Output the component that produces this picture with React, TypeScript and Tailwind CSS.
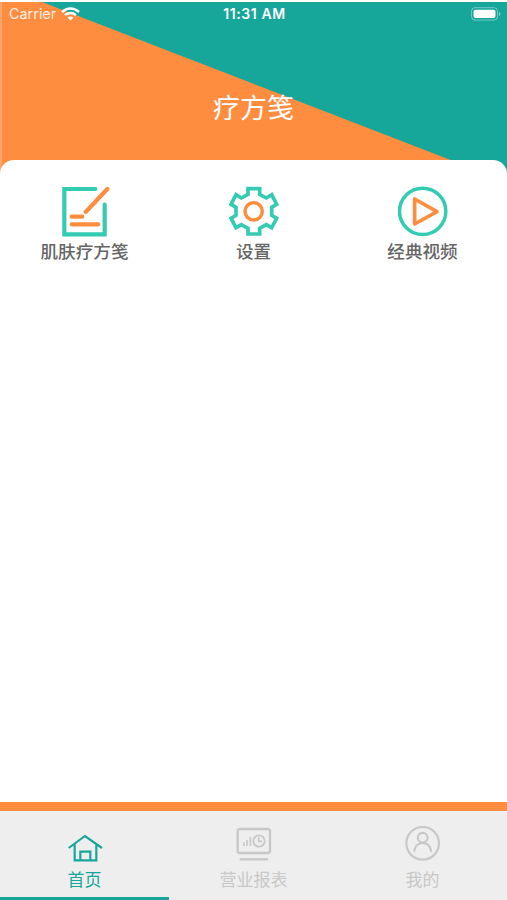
import type { ReactNode } from 'react';

const teal = '#33cbb2';
const orange = '#ff8d40';

const NoteIcon = () => (
  <svg className="h-[52px] w-[50px]" viewBox="1 0 150 156" fill="none" strokeWidth="12.5" strokeLinecap="round">
    <path d="M107 9H14v136h121V56" stroke={teal} />
    <path d="M143 9L78 78M36 92h32M36 115h80" stroke={orange} />
  </svg>
);

const GearIcon = () => (
  <svg className="h-[52px] w-[50px]" viewBox="1 0 150 156" fill="none">
    <path
      d="M58 8H93V25L113 36L129 26L144 55L129 64V88L144 97L129 125L113 116L93 127V144H58V127L38 116L22 125L7 97L22 88V64L7 55L22 26L38 36L58 25Z"
      stroke={teal}
      strokeWidth="11"
    />
    <circle cx="75" cy="76" r="26" stroke={orange} strokeWidth="10.5" />
  </svg>
);

const VideoIcon = () => (
  <svg className="h-[52px] w-[50px]" viewBox="1 0 150 156" fill="none" strokeLinejoin="round">
    <circle cx="75" cy="76" r="69.5" stroke={teal} strokeWidth="10.5" />
    <path d="M51 39v75l67-37z" stroke={orange} strokeWidth="11" />
  </svg>
);

const HomeIcon = () => (
  <svg className="size-9" viewBox="0 0 108 108" fill="none" stroke="currentColor" strokeWidth="6.5">
    <path d="M5 66L54 30L105 66M23 54v49h65V54M40 103V77h30v26" />
  </svg>
);

const ReportIcon = () => (
  <svg className="size-9" viewBox="2 0 108 108" fill="none" stroke="currentColor" strokeWidth="7">
    <rect x="7" y="9" width="97" height="72" rx="7" />
    <path d="M13 100h85" />
    <path d="M26 49v11M35 42v18M45 32v28" strokeWidth="5" />
    <circle cx="71" cy="45" r="17" strokeWidth="5.5" />
    <path d="M70 34v12h10" strokeWidth="5" />
  </svg>
);

const UserIcon = () => (
  <svg className="size-9" viewBox="1 0 108 108" fill="none" stroke="currentColor" strokeWidth="6.5">
    <circle cx="54" cy="52" r="49" />
    <circle cx="54" cy="35" r="14.5" />
    <path d="M29 75C31 43 77 43 79 75" strokeLinecap="round" />
  </svg>
);

const StatusBar = () => (
  <div className="relative grid h-6 grid-cols-3 items-center pr-[5px] pl-[9px] font-['Inter',sans-serif] text-white">
    <div className="flex items-center gap-[5px]">
      <span className="text-[14.4px] leading-none opacity-85">Carrier</span>
      <svg className="h-[14px] w-[19px]" viewBox="0 0 19 14" fill="none" stroke="currentColor" strokeWidth="2.5">
        <path d="M1 5C6 .4 13 .4 18 5M4.1 8.2c3-2.8 7.8-2.8 10.8 0" />
        <path d="M6.6 10.6c1.7-1.4 4.1-1.4 5.8 0L9.5 13.5z" fill="currentColor" stroke="none" />
      </svg>
    </div>
    <div className="pr-[2px] text-center text-[14px] leading-none font-semibold tracking-[0.6px]">11:31 AM</div>
    <svg className="h-[14px] w-[32px] justify-self-end" viewBox="0 0 32 14">
      <rect x="1.5" y=".7" width="26" height="12.4" rx="3.5" fill="none" stroke="white" strokeOpacity=".4" />
      <rect x="3.5" y="2.7" width="22" height="8.4" rx="2" fill="white" />
      <path d="M29 4.7c2 1 2 3.4 0 4.4z" fill="white" fillOpacity=".45" />
    </svg>
  </div>
);

const menu: { label: string; icon: ReactNode }[] = [
  { label: '肌肤疗方笺', icon: <NoteIcon /> },
  { label: '设置', icon: <GearIcon /> },
  { label: '经典视频', icon: <VideoIcon /> },
];

const tabs: { label: string; icon: ReactNode; active?: boolean }[] = [
  { label: '首页', icon: <HomeIcon />, active: true },
  { label: '营业报表', icon: <ReportIcon /> },
  { label: '我的', icon: <UserIcon /> },
];

export default function App() {
  return (
    <div className="flex h-[900px] w-[507px] flex-col overflow-hidden bg-white pt-[2px] font-['Noto_Sans_CJK_SC',sans-serif]">
      <header className="relative h-[174px] shrink-0 bg-[#ff8d40]">
        <svg className="absolute inset-0 h-full w-full" viewBox="0 0 507 174">
          <path d="M42 0H507V174H492Z" fill="#16a69a" />
          <path d="M0 0h2v174h-2z" fill="#ffa469" />
        </svg>
        <StatusBar />
        <h1 className="relative pt-[63px] text-center text-[27px] leading-9 font-normal text-white">疗方笺</h1>
      </header>

      <main className="relative -mt-4 flex-1 rounded-t-[14px] bg-white pt-[26px]">
        <div className="grid grid-cols-3">
          {menu.map((item) => (
            <button key={item.label} className="flex flex-col items-center">
              {item.icon}
              <span className="text-[17.6px] leading-[26px] font-medium text-[#656565]">{item.label}</span>
            </button>
          ))}
        </div>
      </main>

      <nav className="grid h-[98px] shrink-0 grid-cols-3 border-t-[9px] border-[#ff8d40] bg-[#eeeeee]">
        {tabs.map((tab) => (
          <button
            key={tab.label}
            className={
              tab.active
                ? 'flex flex-col items-center border-b-[3px] border-[#16a69a] pt-[15px] text-[#16a69a]'
                : 'flex flex-col items-center pt-[15px] text-[#c8c8c8]'
            }
          >
            {tab.icon}
            <span className="mt-[5px] text-[17px] leading-6">{tab.label}</span>
          </button>
        ))}
      </nav>
    </div>
  );
}
